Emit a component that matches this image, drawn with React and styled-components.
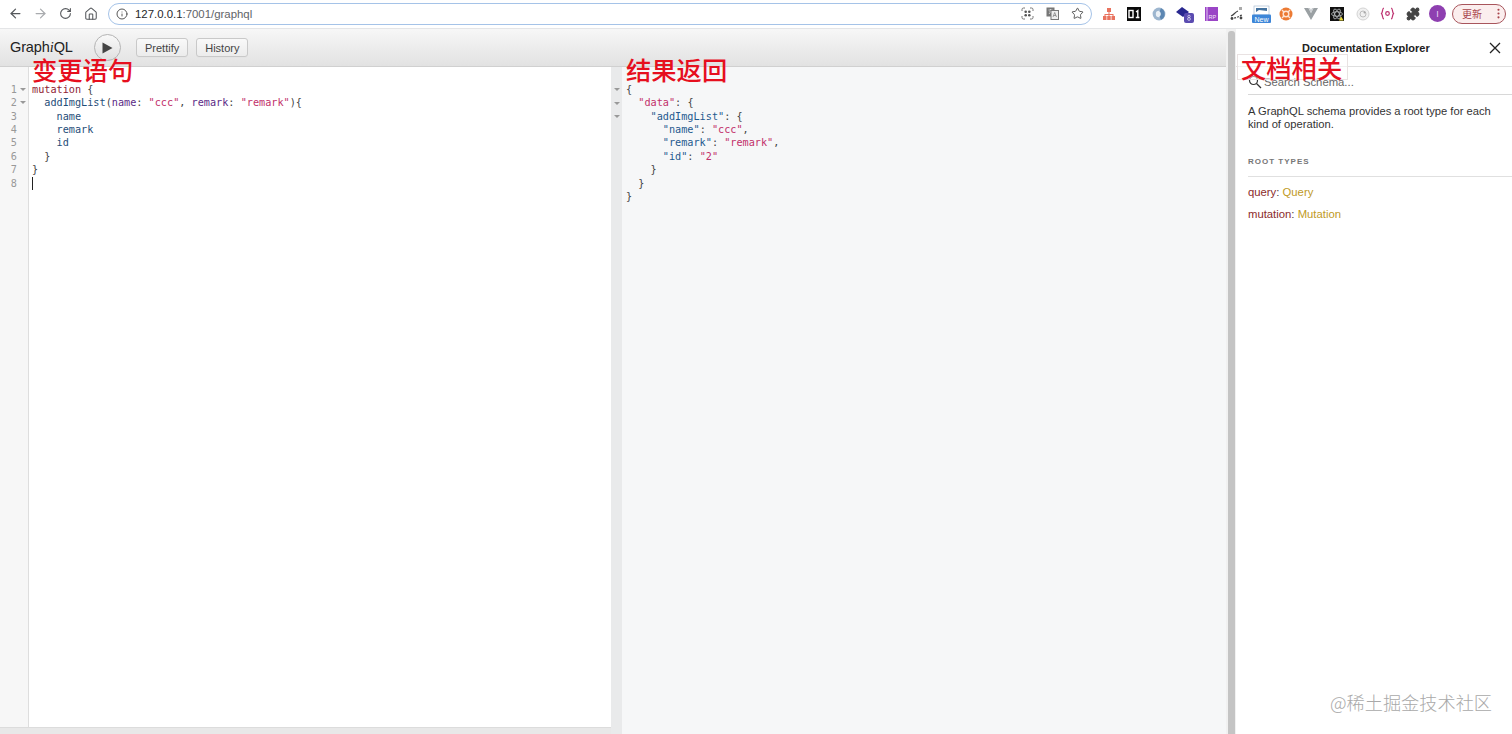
import React from "react";
import styled, { createGlobalStyle } from "styled-components";
import { ArrowLeft, ArrowRight, RotateCw, Home, Info, Star, Puzzle, MoreVertical } from "lucide-react";

const Global = createGlobalStyle`
  html, body { margin: 0; padding: 0; height: 100%; overflow: hidden; background: #fff; }
  #root { height: 100%; }
`;

const Page = styled.div`
  position: relative; width: 1512px; height: 734px; display: flex; flex-direction: column;
  font-family: "Liberation Sans", Arial, sans-serif; overflow: hidden; background: #fff;
`;
const BrowserBar = styled.header`
  height: 29px; flex: none; display: flex; align-items: center; padding: 0 0 1px 3px;
  box-sizing: border-box; background: #fff; border-bottom: 1px solid #e4e5e7;
`;
const NavButton = styled.span`
  width: 25px; height: 24px; flex: none; display: flex; align-items: center; justify-content: center;
  color: ${p => p.$off ? "#a9abae" : "#55585c"};
`;
const Omnibox = styled.div`
  flex: none; width: 984px; height: 22px; margin-left: 5px; box-sizing: border-box; display: flex; align-items: center;
  border: 1.5px solid #a5c3e8; border-radius: 11px; padding: 0 1px 0 7px; font-size: 11.4px; color: #5f6368;
`;
const Host = styled.span` color: #26282b; margin-left: 7px; `;
const OmniSpacer = styled.span` flex: 1; `;
const OmniIcon = styled.span`
  width: 25px; flex: none; display: flex; justify-content: center; color: #5f6368;
`;
const Extensions = styled.div` display: flex; margin-left: 4px; flex: none; `;
const Ext = styled.span`
  width: ${p => p.$w || 25}px; height: 24px; flex: none; display: flex; align-items: center; justify-content: center;
`;
const Avatar = styled.span`
  width: 17px; height: 17px; border-radius: 50%; background: #8e3fb0; color: #e9d5f2;
  font-size: 9px; display: flex; align-items: center; justify-content: center;
`;
const UpdatePill = styled.span`
  width: 54px; height: 20px; margin-left: 3px; flex: none; box-sizing: border-box; border: 1px solid #a8555c; border-radius: 10px;
  background: #fbeeee; color: #a8454c; font: 10px "Noto Sans CJK SC", sans-serif;
  display: flex; align-items: center; justify-content: space-between; padding: 0 0 0 9px;
`;

const Body = styled.div` flex: 1; display: flex; min-height: 0; `;
const App = styled.main` flex: none; width: 1226px; display: flex; flex-direction: column; `;
const Toolbar = styled.div`
  height: 38px; flex: none; box-sizing: border-box; display: flex; align-items: center; padding-left: 10px;
  background: linear-gradient(#f7f7f7, #e2e2e2); border-bottom: 1px solid #d0d0d0;
`;
const Logo = styled.div` font-size: 14.5px; color: #222; width: 84px; letter-spacing: -0.12px; & i { font-family: "Liberation Serif", serif; } `;
const RunButton = styled.button`
  width: 27px; height: 27px; padding: 0; border-radius: 50%; border: 1px solid #b4b4b4; flex: none;
  background: linear-gradient(#f9f9f9, #e0e0e0); display: flex; align-items: center; justify-content: center;
`;
const ToolButton = styled.button`
  height: 19px; margin-left: ${p => p.$gap}px; padding: 0 8px; box-sizing: border-box; border-radius: 3px; border: 1px solid #c9c9c9;
  background: linear-gradient(#f9f9f9, #ececec); font: 11px "Liberation Sans", sans-serif; color: #444; box-shadow: 0 1px 0 #e4e4e4;
`;
const Panes = styled.div` flex: 1; display: flex; min-height: 0; `;
const EditorPane = styled.section` flex: none; width: 611px; display: flex; background: #fff; `;
const Gutter = styled.div`
  flex: none; width: 29px; box-sizing: border-box; background: #f7f7f7; border-right: 1px solid #dedede; padding-top: 15.8px;
`;
const GutterLine = styled.div`
  height: 13.43px; display: flex; align-items: center; justify-content: flex-end; padding-right: 2px;
  font: 10.2px/13.43px "DejaVu Sans Mono", monospace; color: #999;
  & > span { width: 7px; height: 6px; margin-left: 2px; display: flex; align-items: center; justify-content: center; }
`;
const Caret = styled.i`
  display: block; width: 0; height: 0; border: 3px solid transparent; border-top: 3.5px solid #999; border-bottom: 0;
`;
const Code = styled.pre`
  margin: 0; padding: 15.8px 0 0 3px; flex: 1; font: 10.2px/13.43px "DejaVu Sans Mono", monospace; color: #444;
`;
const CodeLine = styled.div` height: 13.43px; white-space: pre; `;
const T = styled.span` color: ${p => p.$c}; `;
const Cursor = styled.i` display: block; width: 1px; height: 13px; background: #222; `;
const ResultPane = styled.section` flex: 1; display: flex; background: #f6f7f8; `;
const ResultGutter = styled.div` flex: none; width: 11px; background: #e9eaeb; padding-top: 16px; box-sizing: border-box; `;
const FoldSlot = styled.div` height: 13.43px; display: flex; align-items: center; justify-content: center; `;
const ResultCode = styled(Code)` padding-left: 4px; `;
const BottomBar = styled.div` height: 7px; flex: none; background: #e8e8e8; border-top: 1px solid #dcdcdc; box-sizing: border-box; width: 611px; `;
const LeftColumn = styled.div` flex: none; width: 611px; display: flex; flex-direction: column; `;
const LeftFill = styled.div` flex: 1; display: flex; min-height: 0; `;

const Resizer = styled.div`
  flex: none; width: 10px; box-sizing: border-box; background: #f1f1f1; padding: 2px 1px 0 2px;
  & > i { display: block; height: 100%; background: #c4c4c4; border-radius: 3px 3px 0 0; }
`;
const Doc = styled.aside` flex: 1; background: #fff; display: flex; flex-direction: column; font-size: 11px; color: #222; `;
const DocHead = styled.div`
  height: 38px; flex: none; box-sizing: border-box; display: flex; align-items: center; border-bottom: 1px solid #e0e0e0;
  padding-left: 66px; font-weight: bold; font-size: 11px; color: #222;
`;
const CloseIcon = styled.svg` margin-left: 59px; `;
const DocBody = styled.div` padding: 0 0 0 12px; `;
const Search = styled.div`
  height: 28px; display: flex; align-items: center; gap: 2px; border-bottom: 1px solid #d8d8d8; color: #666; padding-top: 2px; box-sizing: border-box; font-size: 11.3px;
`;
const Para = styled.p` margin: 10px 0 0; font-size: 11.2px; line-height: 13px; color: #333; width: 255px; `;
const SectionTitle = styled.div`
  margin-top: 26px; padding-bottom: 9px; font-size: 8px; line-height: 10px; letter-spacing: 1px; font-weight: bold; color: #777; border-bottom: 1px solid #e0e0e0;
`;
const RootRow = styled.div` margin-top: 9px; line-height: 13px; font-size: 11.3px; color: #444; `;

const Note = styled.div`
  position: absolute; left: ${p => p.$x}px; top: ${p => p.$y}px; font: 500 25.3px/29px "Noto Sans CJK SC", sans-serif; color: #e60f1e; white-space: nowrap;
`;
const BoxedNote = styled(Note)`
  box-sizing: border-box; width: 111px; height: 26px; padding-left: 3px; line-height: 25px; border: 1px solid #e9e2e2; background: rgba(255,255,255,.5);
`;
const Watermark = styled.div`
  position: absolute; left: 1330px; top: 689px; font: 300 18.2px/26px "Noto Sans CJK SC", sans-serif; color: #a9a9a9; white-space: nowrap;
`;

const KW = "#8f1c33", DEF = "#1f4e79", ATTR = "#5b2a86", STR = "#c2306a", KEY = "#1f5a8f";

const Sitemap = () => <svg width="14" height="14" viewBox="0 0 14 14" fill="#e9735f"><rect x="5" y="1" width="4" height="4"/><rect x="1" y="9" width="3.5" height="4"/><rect x="5.2" y="9" width="3.5" height="4"/><rect x="9.5" y="9" width="3.5" height="4"/><path d="M6.5 5h1v2H11.5v2h-1V8h-3v1h-1V8h-3v1h-1V7h4z"/></svg>;
const ZeroOne = () => <svg width="14" height="14" viewBox="0 0 14 14"><rect width="14" height="14" fill="#0a0a0a"/><rect x="2" y="3.5" width="4" height="7" fill="none" stroke="#fff" strokeWidth="1.4"/><path d="M9 5l1.8-1.3V10.5M8.8 10.5h3.6" fill="none" stroke="#fff" strokeWidth="1.4"/></svg>;
const Ring = () => <svg width="14" height="14" viewBox="0 0 14 14"><circle cx="7" cy="7" r="6.4" fill="#9db6cf"/><circle cx="7" cy="7" r="3.2" fill="#eaf0f6"/><path d="M9 1.2 A6.4 6.4 0 0 1 9 12.8 L7.5 9.5 A3 3 0 0 0 7.5 4.5Z" fill="#5c87b2"/></svg>;
const Badge8 = () => <svg width="20" height="18" viewBox="0 0 20 18"><path d="M1 7l6-5 7 5-6 5z" fill="#28278f"/><rect x="9" y="8" width="10" height="10" rx="2" fill="#5a4bb0"/><path d="M14 10.2a1.2 1.2 0 1 1 0 2.4 1.4 1.4 0 1 1 0 2.8 1.4 1.4 0 1 1 0-2.8 1.2 1.2 0 1 1 0-2.4z" fill="none" stroke="#e8e6f7" strokeWidth=".7"/></svg>;
const RP = () => <svg width="13" height="14" viewBox="0 0 13 14"><rect width="13" height="14" fill="#9a45c6"/><rect x="1.5" y="0" width="1" height="14" fill="#e4c6f3"/><text x="3.5" y="12" fontSize="5.5" fill="#f3e5fa" fontFamily="Liberation Sans">RP</text></svg>;
const Scatter = () => <svg width="15" height="15" viewBox="0 0 15 15" fill="none" stroke="#444" strokeWidth="1.2"><path d="M2 10c3-1 4-4 7-5"/><path d="M5 12c3 0 5-2 8-3" strokeDasharray="2 1.2"/><rect x="10" y="1" width="3" height="3" fill="#aaa" stroke="none"/><circle cx="3" cy="12.5" r="1.4" fill="#444" stroke="none"/><circle cx="12" cy="12" r="1.4" fill="#444" stroke="none"/></svg>;
const NewBadge = () => <svg width="19" height="18" viewBox="0 0 19 18"><rect x="2" y="1" width="15" height="9" fill="#fff" stroke="#9fb4cc" strokeWidth=".6"/><path d="M4 3h11v3l-8-1-3 2z" fill="#45739f"/><rect y="9.5" width="19" height="8.5" rx="1" fill="#3d86d8"/><text x="9.5" y="16.5" fontSize="7" textAnchor="middle" fill="#fff" fontFamily="Liberation Sans">New</text></svg>;
const Orange = () => <svg width="14" height="14" viewBox="0 0 14 14"><circle cx="7" cy="7" r="6.5" fill="#ec7a33"/><circle cx="7" cy="7" r="2.8" fill="none" stroke="#fde4d3" strokeWidth="1.4"/><path d="M3 3l2.2 2.2M11 3L8.8 5.2M3 11l2.2-2.2M11 11L8.8 8.8" stroke="#fde4d3" strokeWidth="1.4"/></svg>;
const Vee = () => <svg width="14" height="12" viewBox="0 0 14 12"><path d="M0 0h4.500L7 5l2.500-5H14L7 12z" fill="#9aa0a3"/><path d="M4.500 0L7 5l2.500-5h-1.500L7 2 6 0z" fill="#c8cccf"/></svg>;
const Atom = () => <svg width="14" height="14" viewBox="0 0 14 14" fill="none"><rect width="14" height="14" fill="#111"/><g stroke="#cfd3d6" strokeWidth=".7"><ellipse cx="7" cy="7" rx="5.5" ry="2.2"/><ellipse cx="7" cy="7" rx="5.5" ry="2.2" transform="rotate(60 7 7)"/><ellipse cx="7" cy="7" rx="5.5" ry="2.2" transform="rotate(120 7 7)"/></g><path d="M9 13.5l2.2-4 2.4 4z" fill="#e8d93a"/></svg>;
const Disc = () => <svg width="14" height="14" viewBox="0 0 14 14" fill="none"><circle cx="7" cy="7" r="6" fill="#f1f1f1" stroke="#d4d4d4"/><circle cx="7" cy="7" r="3" stroke="#bdbdbd"/><circle cx="8.5" cy="5.5" r="1" fill="#a8a8a8"/></svg>;
const Curly = () => <svg width="15" height="13" viewBox="0 0 15 13" fill="none" stroke="#bd2f6e" strokeWidth="1.2"><path d="M4 1C2 1 3 5 1.5 6.5 3 8 2 12 4 12M11 1c2 0 1 4 2.5 5.5C12 8 13 12 11 12"/><circle cx="7.5" cy="6.5" r="1.8"/></svg>;
const Play = () => <svg width="11" height="12" viewBox="0 0 11 12"><path d="M.5.5L10.500 6 .5 11.500z" fill="#444"/></svg>;
const ScanIcon = () => <svg width="13" height="13" viewBox="0 0 13 13" fill="none" stroke="#777"><path d="M1 4V2.500A1.500 1.500 0 0 1 2.500 1H4M9 1h1.500A1.500 1.500 0 0 1 12 2.500V4M12 9v1.500a1.500 1.500 0 0 1-1.500 1.500H9M4 12H2.500A1.500 1.500 0 0 1 1 10.500V9"/><g fill="#555" stroke="none"><circle cx="4.700" cy="4.700" r="1.300"/><circle cx="8.300" cy="4.700" r="1.300"/><circle cx="4.700" cy="8.300" r="1.300"/><circle cx="8.300" cy="8.300" r="1.300"/></g></svg>;
const TranslateIcon = () => <svg width="13" height="13" viewBox="0 0 13 13"><rect x=".5" y=".5" width="8" height="9" fill="#777"/><path d="M2.500 3h4M4.500 2v1M3 7l3-4M3.500 4l3 3" stroke="#eee" strokeWidth=".7" fill="none"/><rect x="5" y="3.500" width="7.500" height="9" fill="#eee" stroke="#777"/><path d="M7 10l1.700-4.500L10.500 10M7.600 8.500h2.300" stroke="#777" strokeWidth=".7" fill="none"/></svg>;

const gutterLines = [[1, true], [2, true], [3], [4], [5], [6], [7], [8]];

export default function Root() {
  return (
    <Page>
      <Global />
      <BrowserBar>
        <NavButton><ArrowLeft size={15} strokeWidth={2} /></NavButton>
        <NavButton $off><ArrowRight size={15} strokeWidth={2} /></NavButton>
        <NavButton><RotateCw size={13} strokeWidth={2} /></NavButton>
        <NavButton><Home size={14} strokeWidth={1.8} /></NavButton>
        <Omnibox>
          <Info size={12} strokeWidth={1.8} color="#444" />
          <Host>127.0.0.1</Host><span>:7001/graphql</span>
          <OmniSpacer />
          <OmniIcon><ScanIcon /></OmniIcon>
          <OmniIcon><TranslateIcon /></OmniIcon>
          <OmniIcon><Star size={13} strokeWidth={1.6} color="#444" /></OmniIcon>
        </Omnibox>
        <Extensions>
          <Ext><Sitemap /></Ext>
          <Ext><ZeroOne /></Ext>
          <Ext><Ring /></Ext>
          <Ext $w={28}><Badge8 /></Ext>
          <Ext $w={24}><RP /></Ext>
          <Ext $w={26}><Scatter /></Ext>
          <Ext $w={24}><NewBadge /></Ext>
          <Ext><Orange /></Ext>
          <Ext><Vee /></Ext>
          <Ext $w={27}><Atom /></Ext>
          <Ext><Disc /></Ext>
          <Ext $w={25}><Curly /></Ext>
          <Ext $w={26}><Puzzle size={14} fill="#444" color="#444" /></Ext>
          <Ext $w={23}><Avatar>I</Avatar></Ext>
        </Extensions>
        <UpdatePill>更新<MoreVertical size={13} strokeWidth={2} color="#a8454c" /></UpdatePill>
      </BrowserBar>
      <Body>
        <App>
          <Toolbar>
            <Logo>Graph<i>i</i>QL</Logo>
            <RunButton aria-label="Run"><Play /></RunButton>
            <ToolButton $gap={15}>Prettify</ToolButton>
            <ToolButton $gap={8}>History</ToolButton>
          </Toolbar>
          <Panes>
            <LeftColumn>
              <LeftFill>
                <EditorPane>
                  <Gutter>
                    {gutterLines.map(([n, fold]) => (
                      <GutterLine key={n}>{n}<span>{fold && <Caret />}</span></GutterLine>
                    ))}
                  </Gutter>
                  <Code>
                    <CodeLine><T $c={KW}>mutation</T> {"{"}</CodeLine>
                    <CodeLine>{"  "}<T $c={DEF}>addImgList</T>(<T $c={ATTR}>name</T>: <T $c={STR}>"ccc"</T>, <T $c={ATTR}>remark</T>: <T $c={STR}>"remark"</T>){"{"}</CodeLine>
                    <CodeLine>{"    "}<T $c={DEF}>name</T></CodeLine>
                    <CodeLine>{"    "}<T $c={DEF}>remark</T></CodeLine>
                    <CodeLine>{"    "}<T $c={DEF}>id</T></CodeLine>
                    <CodeLine>{"  }"}</CodeLine>
                    <CodeLine>{"}"}</CodeLine>
                    <CodeLine><Cursor /></CodeLine>
                  </Code>
                </EditorPane>
              </LeftFill>
              <BottomBar />
            </LeftColumn>
            <ResultPane>
              <ResultGutter>
                <FoldSlot><Caret /></FoldSlot>
                <FoldSlot><Caret /></FoldSlot>
                <FoldSlot><Caret /></FoldSlot>
              </ResultGutter>
              <ResultCode>
                <CodeLine>{"{"}</CodeLine>
                <CodeLine>{"  "}<T $c={STR}>"data"</T>: {"{"}</CodeLine>
                <CodeLine>{"    "}<T $c={KEY}>"addImgList"</T>: {"{"}</CodeLine>
                <CodeLine>{"      "}<T $c={KEY}>"name"</T>: <T $c={STR}>"ccc"</T>,</CodeLine>
                <CodeLine>{"      "}<T $c={KEY}>"remark"</T>: <T $c={STR}>"remark"</T>,</CodeLine>
                <CodeLine>{"      "}<T $c={KEY}>"id"</T>: <T $c={STR}>"2"</T></CodeLine>
                <CodeLine>{"    }"}</CodeLine>
                <CodeLine>{"  }"}</CodeLine>
                <CodeLine>{"}"}</CodeLine>
              </ResultCode>
            </ResultPane>
          </Panes>
        </App>
        <Resizer><i /></Resizer>
        <Doc>
          <DocHead>
            Documentation Explorer
            <CloseIcon width="12" height="12" viewBox="0 0 12 12" fill="none" stroke="#222" strokeWidth="1.3"><path d="M1 1l10 10M11 1L1 11" /></CloseIcon>
          </DocHead>
          <DocBody>
            <Search>
              <svg width="14" height="14" viewBox="0 0 14 14" fill="none" stroke="#333" strokeWidth="1.2"><circle cx="5.5" cy="5.5" r="4" /><path d="M8.500 8.500l4.500 4.500" /></svg>
              Search Schema...
            </Search>
            <Para>A GraphQL schema provides a root type for each kind of operation.</Para>
            <SectionTitle>ROOT TYPES</SectionTitle>
            <RootRow><T $c="#8b2b2b">query</T>: <T $c="#bf9a1f">Query</T></RootRow>
            <RootRow><T $c="#8b2b2b">mutation</T>: <T $c="#bf9a1f">Mutation</T></RootRow>
          </DocBody>
        </Doc>
      </Body>
      <Note $x={32} $y={55}>变更语句</Note>
      <Note $x={626} $y={55}>结果返回</Note>
      <BoxedNote $x={1237} $y={54}>文档相关</BoxedNote>
      <Watermark>@稀土掘金技术社区</Watermark>
    </Page>
  );
}
